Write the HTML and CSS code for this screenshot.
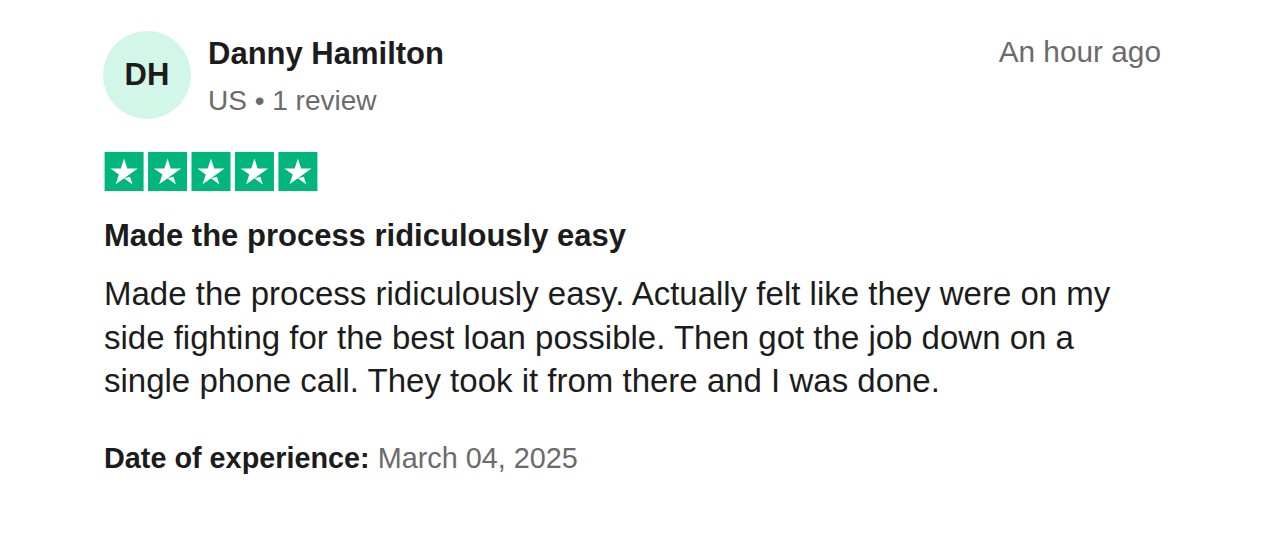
FILE: index.html
```html
<!DOCTYPE html>
<html lang="en">
<head>
<meta charset="utf-8">
<title>Review</title>
<link rel="stylesheet" href="styles.css">
</head>
<body>
<article class="review">
  <header class="review-header">
    <div class="avatar">DH</div>
    <div class="consumer">
      <div class="consumer-name">Danny Hamilton</div>
      <div class="consumer-meta">US • 1 review</div>
    </div>
    <time class="review-time">An hour ago</time>
  </header>
  <div class="stars" aria-label="Rated 5 out of 5">
    <svg viewBox="0 0 251 46" width="214" height="39" xmlns="http://www.w3.org/2000/svg">
      <g>
        <rect x="0" y="0" width="46" height="46" fill="#00b67a"/>
        <rect x="51.25" y="0" width="46" height="46" fill="#00b67a"/>
        <rect x="102.5" y="0" width="46" height="46" fill="#00b67a"/>
        <rect x="153.75" y="0" width="46" height="46" fill="#00b67a"/>
        <rect x="205" y="0" width="46" height="46" fill="#00b67a"/>
      </g>
      <g fill="#ffffff">
        <path d="M23 31.01L30 29.24L32.93 38.24L23 31.01ZM39.11 19.36H26.79L23 7.77L19.21 19.36H6.89L16.86 26.55L13.07 38.14L23.04 30.96L29.18 26.55L39.11 19.36Z"/>
        <path transform="translate(51.25 0)" d="M23 31.01L30 29.24L32.93 38.24L23 31.01ZM39.11 19.36H26.79L23 7.77L19.21 19.36H6.89L16.86 26.55L13.07 38.14L23.04 30.96L29.18 26.55L39.11 19.36Z"/>
        <path transform="translate(102.5 0)" d="M23 31.01L30 29.24L32.93 38.24L23 31.01ZM39.11 19.36H26.79L23 7.77L19.21 19.36H6.89L16.86 26.55L13.07 38.14L23.04 30.96L29.18 26.55L39.11 19.36Z"/>
        <path transform="translate(153.75 0)" d="M23 31.01L30 29.24L32.93 38.24L23 31.01ZM39.11 19.36H26.79L23 7.77L19.21 19.36H6.89L16.86 26.55L13.07 38.14L23.04 30.96L29.18 26.55L39.11 19.36Z"/>
        <path transform="translate(205 0)" d="M23 31.01L30 29.24L32.93 38.24L23 31.01ZM39.11 19.36H26.79L23 7.77L19.21 19.36H6.89L16.86 26.55L13.07 38.14L23.04 30.96L29.18 26.55L39.11 19.36Z"/>
      </g>
    </svg>
  </div>
  <h2 class="review-title">Made the process ridiculously easy</h2>
  <p class="review-text">Made the process ridiculously easy. Actually felt like they were on my side fighting for the best loan possible. Then got the job down on a single phone call. They took it from there and I was done.</p>
  <p class="review-date"><span class="date-label">Date of experience:</span> March 04, 2025</p>
</article>
</body>
</html>
```

FILE: styles.css
```css
* {
  box-sizing: border-box;
}

html, body {
  margin: 0;
  padding: 0;
  background: #ffffff;
}

body {
  font-family: "Liberation Sans", Arial, Helvetica, sans-serif;
  color: #1c1c1c;
}

.review {
  padding: 31px 109px 0 103px;
}

.review-header {
  display: flex;
  align-items: flex-start;
}

.avatar {
  flex: 0 0 88px;
  width: 88px;
  height: 88px;
  border-radius: 50%;
  background: #d2f7e8;
  display: flex;
  align-items: center;
  justify-content: center;
  font-weight: 700;
  font-size: 31px;
  color: #1c1c1c;
}

.consumer {
  margin-left: 17px;
  padding-top: 3px;
  flex: 1 1 auto;
}

.consumer-name {
  font-size: 31px;
  line-height: 40px;
  font-weight: 700;
}

.consumer-meta {
  margin-top: 7px;
  font-size: 28px;
  line-height: 40px;
  color: #6b6b6b;
}

.review-time {
  padding-top: 1px;
  font-size: 29.8px;
  line-height: 40px;
  color: #6b6b6b;
}

.stars {
  margin-top: 31px;
  margin-left: 1px;
  height: 39px;
}

.stars svg {
  display: block;
}

.review-title {
  margin: 25px 0 0 1px;
  font-size: 31px;
  line-height: 40px;
  font-weight: 700;
}

.review-text {
  margin: 16px 0 0 1px;
  font-size: 33px;
  line-height: 43.5px;
}

.review-date {
  margin: 35px 0 0 1px;
  font-size: 28.8px;
  line-height: 40px;
  color: #6b6b6b;
}

.date-label {
  font-weight: 700;
  color: #1c1c1c;
}
```
